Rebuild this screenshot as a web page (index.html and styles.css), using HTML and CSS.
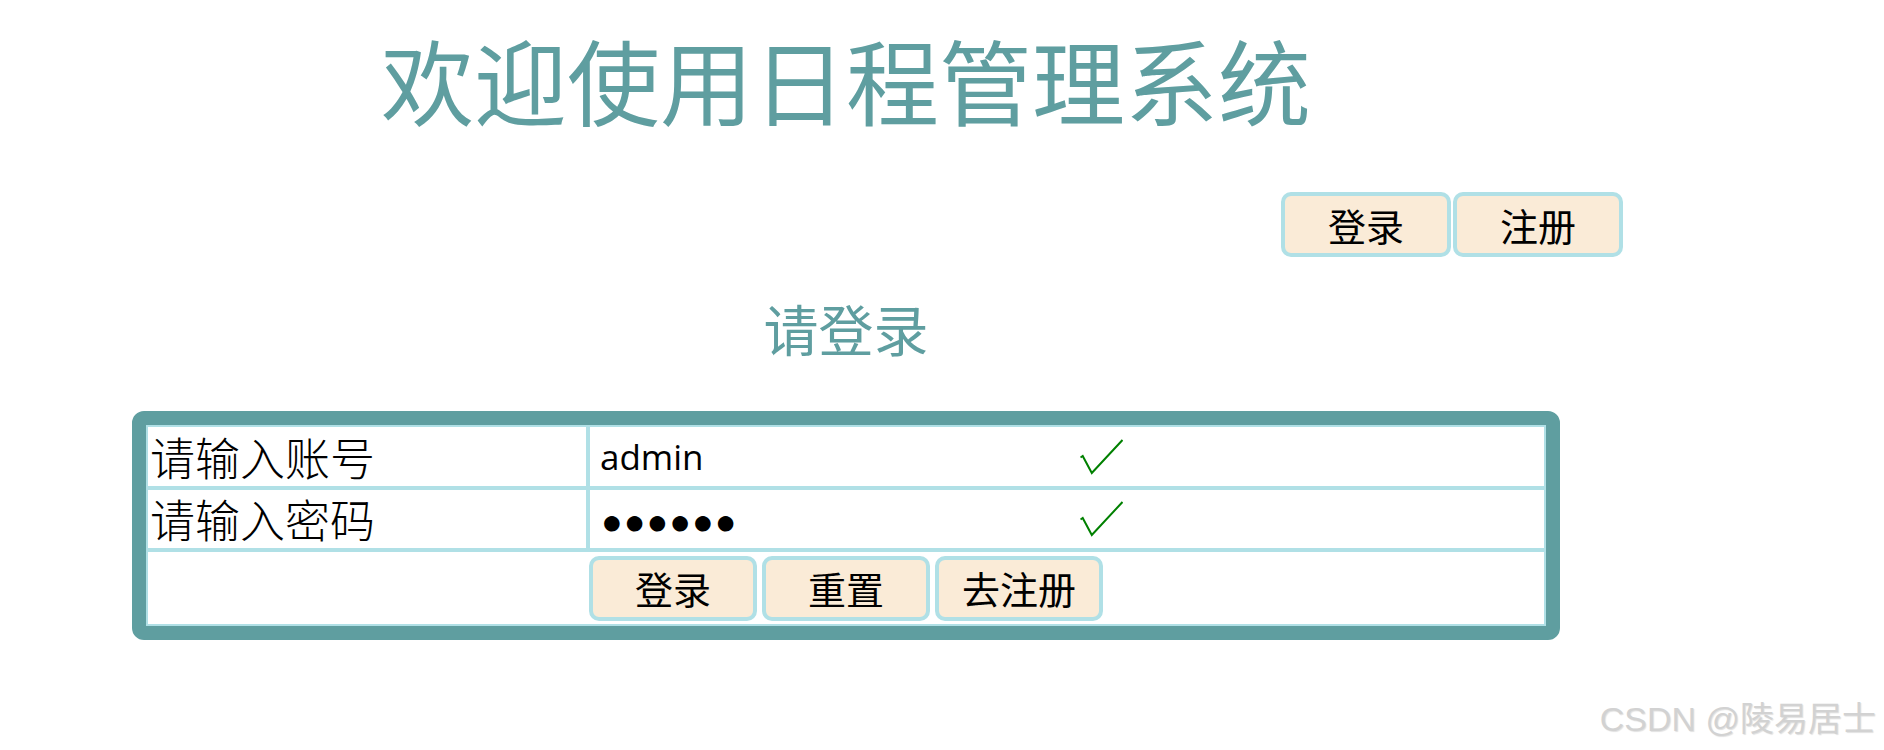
FILE: index.html
```html
<!DOCTYPE html>
<html lang="zh-CN">
<head>
<meta charset="utf-8">
<title>日程管理系统</title>
<link rel="stylesheet" href="styles.css">
</head>
<body>
<div class="page">
  <h1 class="title">欢迎使用日程管理系统</h1>
  <div class="topbar">
    <button class="btn btn-top" type="button">登录</button>
    <button class="btn btn-top" type="button">注册</button>
  </div>
  <h2 class="subtitle">请登录</h2>
  <form class="login-form">
    <table class="login-table">
      <tr class="row-user">
        <td class="c-label">请输入账号</td>
        <td class="c-field">
          <div class="field">
            <input class="inp" type="text" value="admin">
            <svg class="check" viewBox="0 0 43 36" width="43" height="36"><polyline points="0.5,18.5 2.7,17 11.8,34 42.5,1" fill="none" stroke="#008000" stroke-width="2"/></svg>
          </div>
        </td>
      </tr>
      <tr class="row-pass">
        <td class="c-label">请输入密码</td>
        <td class="c-field">
          <div class="field">
            <input class="inp inp-pass" type="text" value="●●●●●●" aria-label="密码">
            <svg class="check" viewBox="0 0 43 36" width="43" height="36"><polyline points="0.5,18.5 2.7,17 11.8,34 42.5,1" fill="none" stroke="#008000" stroke-width="2"/></svg>
          </div>
        </td>
      </tr>
      <tr class="row-actions">
        <td class="c-actions" colspan="2">
          <div class="actions">
            <button class="btn btn-form" type="button">登录</button>
            <button class="btn btn-form" type="reset">重置</button>
            <button class="btn btn-form" type="button">去注册</button>
          </div>
        </td>
      </tr>
    </table>
  </form>
</div>
<div class="watermark">CSDN @陵易居士</div>
</body>
</html>
```

FILE: styles.css
```css
html, body {
  margin: 0;
  padding: 0;
  background: #ffffff;
}

body {
  font-family: "Noto Sans CJK SC", "Noto Sans", sans-serif;
  color: #000;
  position: relative;
  min-height: 750px;
}

.page {
  width: 1692px;
}

.title {
  margin: 0;
  padding-top: 29px;
  font-size: 93px;
  line-height: 100px;
  font-weight: 400;
  color: #5f9ea0;
  text-align: center;
}

.topbar {
  display: flex;
  justify-content: flex-end;
  gap: 2px;
  margin-top: 63px;
  padding-right: 69px;
}

.btn {
  box-sizing: border-box;
  border: 4px solid #b0e0e6;
  border-radius: 10px;
  background: #faebd7;
  color: #000;
  font-family: "Noto Sans CJK SC", sans-serif;
  font-size: 38px;
  line-height: 1;
  padding: 0;
  margin: 0;
  cursor: pointer;
}

.btn-top {
  width: 170px;
  height: 65px;
}

.subtitle {
  margin: 40px 0 0;
  font-size: 55px;
  line-height: 60px;
  font-weight: 400;
  color: #5f9ea0;
  text-align: center;
}

.login-form {
  margin: 0;
}

.login-table {
  margin: 54px auto 0;
  width: 1428px;
  table-layout: fixed;
  border: 14px solid #5f9ea0;
  border-radius: 12px;
  border-spacing: 0;
  border-collapse: separate;
}

.login-table td {
  border: 2px solid #b0e0e6;
  padding: 0 2px;
  vertical-align: middle;
}

.c-label {
  box-sizing: border-box;
  width: 442px;
  font-size: 45px;
  font-weight: 300;
  line-height: 50px;
  white-space: nowrap;
}

.row-user td {
  height: 59px;
}

.row-pass td {
  height: 58px;
}

.field {
  display: flex;
  align-items: center;
  gap: 11px;
}

.inp {
  box-sizing: border-box;
  width: 477px;
  height: 46px;
  border: none;
  outline: none;
  background: transparent;
  padding: 0 0 0 8px;
  margin: 0;
  font-family: "Open Sans", sans-serif;
  font-size: 35px;
  color: #000;
}

.inp-pass {
  font-family: "Liberation Sans", "DejaVu Sans", sans-serif;
  font-size: 36px;
  letter-spacing: 1px;
  padding: 5px 0 0 9px;
}

.check {
  display: block;
  flex: none;
}

.c-actions {
  height: 72px;
}

.login-table td.c-actions {
  padding: 0;
}

.actions {
  display: flex;
  align-items: center;
  gap: 5px;
  padding-left: 441px;
}

.btn-form {
  width: 168px;
  height: 65px;
}

.watermark {
  position: absolute;
  right: 8px;
  bottom: 12px;
  font-family: "Liberation Sans", "Noto Sans CJK SC", sans-serif;
  font-size: 34px;
  line-height: 38px;
  color: #d2d2d2;
  text-shadow: 1px 1px 1px rgba(0, 0, 0, 0.12);
  white-space: nowrap;
}
```
